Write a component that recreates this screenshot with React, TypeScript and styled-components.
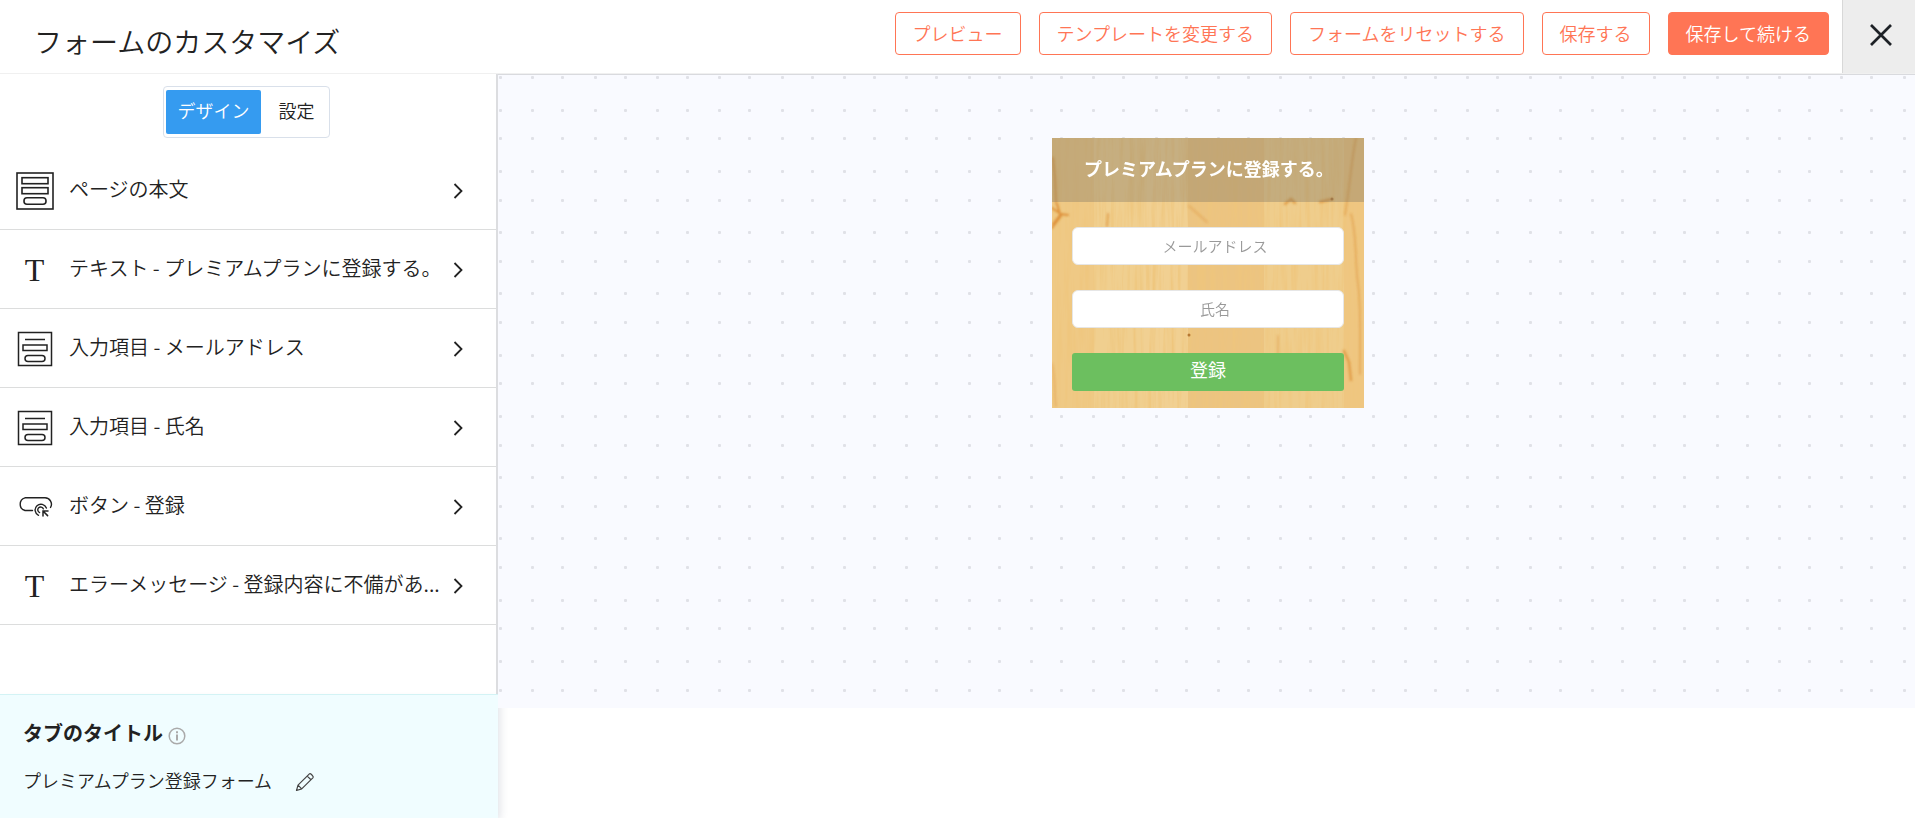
import React from "react";
import styled, { createGlobalStyle } from "styled-components";

const GlobalStyle = createGlobalStyle`
  *, *::before, *::after { box-sizing: border-box; }
  body {
    margin: 0;
    background: #fff;
    color: #222;
    font-family: "Noto Sans CJK JP", "Noto Sans", sans-serif;
    font-weight: 350;
  }
  button, input { font: inherit; color: inherit; }
  h1, h2, p, ul { margin: 0; padding: 0; }
`;

const Page = styled.div`
  display: flex;
  flex-direction: column;
  min-height: 100vh;
`;

const Header = styled.header`
  display: flex;
  height: 74px;
  border-bottom: 1px solid #f0f0f0;
`;

const Title = styled.h1`
  flex: 1;
  padding: 21px 0 0 34px;
  font-size: 28px;
  line-height: 40px;
  font-weight: 350;
  white-space: nowrap;
`;

const Actions = styled.div`
  display: flex;
  gap: 18px;
  padding: 12px 13px 0 0;
`;

const ActionButton = styled.button<{ $primary?: boolean }>`
  height: 43px;
  padding: 0 17px 2px;
  border: 1px solid #ff7555;
  border-radius: 4px;
  background: ${(p) => (p.$primary ? "#ff7555" : "#fff")};
  color: ${(p) => (p.$primary ? "#fff" : "#ff7555")};
  font-size: 18px;
  line-height: 24px;
  white-space: nowrap;
  cursor: pointer;
`;

const CloseButton = styled.button`
  display: flex;
  align-items: center;
  justify-content: center;
  width: 73px;
  padding: 0 0 3px 4px;
  border: 0;
  border-left: 1px solid #d8d8d8;
  background: #ededed;
  cursor: pointer;
`;

const Body = styled.div`
  display: flex;
  flex: 1;
`;

const Sidebar = styled.aside`
  display: flex;
  flex-direction: column;
  flex: none;
  width: 498px;
`;

const SidebarMain = styled.div`
  flex: 1;
  border-right: 2px solid #dcdde0;
`;

const Tabs = styled.div`
  display: flex;
  width: 167px;
  height: 52px;
  margin: 12px auto 13px 163px;
  padding: 3px 2px;
  border: 1px solid #d9e0ea;
  border-radius: 4px;
`;

const Tab = styled.button<{ $active?: boolean }>`
  flex: ${(p) => (p.$active ? "0 0 95px" : "1")};
  padding: ${(p) => (p.$active ? "0 0 4px" : "0 0 4px 5px")};
  border: 0;
  border-radius: 2px;
  background: ${(p) => (p.$active ? "#359bf0" : "transparent")};
  color: ${(p) => (p.$active ? "#fff" : "#222")};
  font-size: 18px;
  line-height: 24px;
  cursor: pointer;
`;

const ItemList = styled.ul`
  list-style: none;
`;

const Item = styled.li`
  border-bottom: 1px solid #dcdddd;
`;

const ItemButton = styled.button`
  display: flex;
  align-items: center;
  width: 100%;
  height: 78px;
  padding: 2px 32px 0 0;
  border: 0;
  background: none;
  text-align: left;
  cursor: pointer;
`;

const IconCell = styled.span`
  display: flex;
  align-items: center;
  justify-content: center;
  flex: none;
  width: 69px;
  height: 40px;
`;

const SerifIcon = styled.span`
  font-family: "Liberation Serif", serif;
  font-size: 32px;
  line-height: 40px;
  font-weight: 400;
`;

const ItemLabel = styled.span`
  flex: 1;
  min-width: 0;
  padding-bottom: 4px;
  overflow: hidden;
  font-size: 20px;
  line-height: 30px;
  text-overflow: ellipsis;
  white-space: nowrap;
`;

const Chevron = styled.svg`
  flex: none;
`;

const TabTitlePanel = styled.section`
  height: 124px;
  padding: 22px 23px 0;
  border-top: 1px solid #d3f3f5;
  background: #f0fdff;
  box-shadow: 4px 4px 8px -2px rgba(40, 60, 90, 0.14);
`;

const PanelHeading = styled.h2`
  display: flex;
  align-items: center;
  gap: 5px;
  font-size: 20px;
  line-height: 32px;
  font-weight: 700;

  svg { margin-top: 6px; }
`;

const PanelValue = styled.div`
  display: flex;
  align-items: center;
  gap: 23px;
  margin-top: 17px;
  font-size: 18px;
  line-height: 28px;
`;

const EditButton = styled.button`
  display: flex;
  padding: 4px 0 0;
  border: 0;
  background: none;
  cursor: pointer;
`;

const Canvas = styled.main`
  position: relative;
  flex: 1;
  margin-bottom: 110px;
  padding: 63px 0 40px 3px;
  border-top: 1px solid #d9dade;
  background: #f9faff;
`;

const DotGrid = styled.svg`
  position: absolute;
  inset: 0;
  width: 100%;
  height: 100%;
`;

const FormCard = styled.form`
  position: relative;
  width: 312px;
  height: 270px;
  margin: 0 auto;
`;

const Wood = styled.svg`
  position: absolute;
  inset: 0;
`;

const FormContent = styled.div`
  position: relative;
`;

const FormHeading = styled.h2`
  height: 64px;
  padding: 16px 0 0 32px;
  background: rgba(110, 105, 95, 0.32);
  color: #fff;
  font-size: 18px;
  line-height: 28px;
  font-weight: 700;
  white-space: nowrap;
`;

const Fields = styled.div`
  display: flex;
  flex-direction: column;
  gap: 25px;
  padding: 25px 20px 18px;
`;

const Field = styled.input`
  width: 100%;
  height: 38px;
  padding: 0 0 2px 14px;
  border: 1px solid #e6e6e6;
  border-radius: 6px;
  background: #fff;
  font-size: 15px;
  text-align: center;

  &::placeholder { color: #999; opacity: 1; }
`;

const SubmitButton = styled.button`
  height: 38px;
  padding: 0 0 6px;
  border: 0;
  border-radius: 3px;
  background: #6cbf5f;
  color: #fff;
  font-size: 18px;
  line-height: 24px;
  font-weight: 400;
  cursor: pointer;
`;

const PageIcon = () => (
  <svg width="38" height="38" viewBox="0 0 38 38" fill="none" stroke="#222" strokeWidth="1.6">
    <rect x="1" y="1" width="36" height="36" />
    <rect x="6" y="5.7" width="26" height="6" />
    <rect x="6" y="15.7" width="26" height="6" />
    <rect x="8" y="25.7" width="22" height="6.5" rx="3" />
  </svg>
);

const InputIcon = () => (
  <svg width="36" height="36" viewBox="0 0 36 36" fill="none" stroke="#222" strokeWidth="1.5">
    <rect x="1.5" y="1.5" width="33" height="33" />
    <path d="M8 8.5h20" />
    <rect x="6" y="14" width="24" height="5.5" />
    <rect x="8" y="24.5" width="20" height="6" rx="3" />
  </svg>
);

const ButtonIcon = () => (
  <svg width="36" height="22" viewBox="0 0 36 22" fill="none" stroke="#222" strokeWidth="1.4" strokeLinecap="round">
    <path d="M15.5 14.5H8A6.6 6.6 0 0 1 8 1.8h20a6.4 6.4 0 0 1 5.5 9.7" />
    <path d="M21.5 19.3a5.8 5.8 0 1 1 7.9-7.2" />
    <path d="M22.6 16.6a2.9 2.9 0 1 1 3.8-3.7" />
    <path d="M26 20v-5h5M26 15l4.6 4.6" strokeWidth="1.5" />
  </svg>
);

const TextIcon = () => <SerifIcon aria-hidden="true">T</SerifIcon>;

const items = [
  { icon: PageIcon, label: "ページの本文" },
  { icon: TextIcon, label: "テキスト - プレミアムプランに登録する。" },
  { icon: InputIcon, label: "入力項目 - メールアドレス" },
  { icon: InputIcon, label: "入力項目 - 氏名" },
  { icon: ButtonIcon, label: "ボタン - 登録" },
  { icon: TextIcon, label: "エラーメッセージ - 登録内容に不備があ..." },
];

const dotColumns = [1, 33, 63, 96, 126, 158];
const dotRows = [1, 34, 62, 95, 124, 156, 185, 217];

const WoodBackground = () => (
  <Wood width="312" height="270" viewBox="0 0 312 270" aria-hidden="true">
    <defs>
      <filter id="grain" x="0" y="0" width="100%" height="100%">
        <feTurbulence type="fractalNoise" baseFrequency="0.22 0.012" numOctaves="4" seed="8" />
        <feColorMatrix values="0 0 0 0 0.86  0 0 0 0 0.56  0 0 0 0 0.2  2 0 0 0 -0.8" />
      </filter>
      <filter id="soft" x="-10%" y="-10%" width="120%" height="120%"><feGaussianBlur stdDeviation="1" /></filter>
    </defs>
    <rect width="312" height="270" fill="#f0cf8f" />
    <rect width="42" height="270" fill="#efc985" />
    <rect x="92" width="44" height="270" fill="#f1d092" />
    <rect x="136" width="76" height="270" fill="#ecc481" />
    <rect x="212" width="80" height="270" fill="#efcd8c" />
    <rect x="292" width="20" height="270" fill="#efc681" />
    <rect width="312" height="270" filter="url(#grain)" />
    <g fill="none" stroke="#d98529" strokeLinecap="round" filter="url(#soft)">
      <path d="M0 70l9 6-8 10M5 66l3 10 8 1M0 90l9-12" strokeWidth="2" opacity=".8" />
      <path d="M1 20l2 20 1 25M56 76l-1 12" strokeWidth="2" opacity=".6" />
      <path d="M304 0c-5 24-6 48-11 77M299 76c6 20 4 50 7 70s2 60 2 90" strokeWidth="1.5" opacity=".5" />
      <path d="M292 213l5 11 2 18M233 66l6-5 4 4M268 64l12-3" strokeWidth="2.5" opacity=".6" />
      <path d="M0 226c4 15 2 28 4 42M137 68l18 16M226 198v20" strokeWidth="2" opacity=".3" />
    </g>
    <circle cx="137" cy="197" r="1.5" fill="#a7651f" opacity=".8" />
    <circle cx="280" cy="61" r="1.5" fill="#9a5b22" opacity=".6" />
  </Wood>
);

export default function App() {
  return (
    <>
      <GlobalStyle />
      <Page>
        <Header>
          <Title>フォームのカスタマイズ</Title>
          <Actions>
            <ActionButton type="button">プレビュー</ActionButton>
            <ActionButton type="button">テンプレートを変更する</ActionButton>
            <ActionButton type="button">フォームをリセットする</ActionButton>
            <ActionButton type="button">保存する</ActionButton>
            <ActionButton type="button" $primary>保存して続ける</ActionButton>
          </Actions>
          <CloseButton type="button" aria-label="閉じる">
            <svg width="24" height="24" viewBox="0 0 24 24" stroke="#1d2126" strokeWidth="2.7">
              <path d="M2 2l20 20M22 2L2 22" />
            </svg>
          </CloseButton>
        </Header>
        <Body>
          <Sidebar>
            <SidebarMain>
              <Tabs>
                <Tab type="button" $active>デザイン</Tab>
                <Tab type="button">設定</Tab>
              </Tabs>
              <ItemList>
                {items.map(({ icon: Icon, label }) => (
                  <Item key={label}>
                    <ItemButton type="button">
                      <IconCell><Icon /></IconCell>
                      <ItemLabel>{label}</ItemLabel>
                      <Chevron width="12" height="18" viewBox="0 0 12 18" fill="none" stroke="#222" strokeWidth="1.8">
                        <path d="M2.5 2l7 7-7 7" />
                      </Chevron>
                    </ItemButton>
                  </Item>
                ))}
              </ItemList>
            </SidebarMain>
            <TabTitlePanel>
              <PanelHeading>
                タブのタイトル
                <svg width="18" height="18" viewBox="0 0 18 18" fill="none" stroke="#aaa" strokeWidth="1.5">
                  <circle cx="9" cy="9" r="7.8" />
                  <path d="M9 7.5v6M9 4.3v2" strokeWidth="2" />
                </svg>
              </PanelHeading>
              <PanelValue>
                プレミアムプラン登録フォーム
                <EditButton type="button" aria-label="編集">
                  <svg width="20" height="20" viewBox="0 0 20 20" fill="none" stroke="#444" strokeWidth="1.2" strokeLinejoin="round">
                    <path d="M1.5 18.5l1.5-5.4L14.4 1.9c1-.9 4.6 2.6 3.7 3.7L6.7 16.9zM3 13.1l3.7 3.8M12.2 4.1l3.8 3.7" />
                  </svg>
                </EditButton>
              </PanelValue>
            </TabTitlePanel>
          </Sidebar>
          <Canvas>
            <DotGrid aria-hidden="true">
              <defs>
                <pattern id="dots" width="187" height="245" patternUnits="userSpaceOnUse">
                  {dotRows.map((y) =>
                    dotColumns.map((x) => (
                      <rect key={`${x}-${y}`} x={x} y={y} width="3" height="3" rx="1" fill="#e0e1e7" />
                    ))
                  )}
                </pattern>
              </defs>
              <rect width="100%" height="100%" fill="url(#dots)" />
            </DotGrid>
            <FormCard onSubmit={(e: React.FormEvent) => e.preventDefault()}>
              <WoodBackground />
              <FormContent>
                <FormHeading>プレミアムプランに登録する。</FormHeading>
                <Fields>
                  <Field type="email" placeholder="メールアドレス" aria-label="メールアドレス" />
                  <Field type="text" placeholder="氏名" aria-label="氏名" />
                  <SubmitButton type="submit">登録</SubmitButton>
                </Fields>
              </FormContent>
            </FormCard>
          </Canvas>
        </Body>
      </Page>
    </>
  );
}
